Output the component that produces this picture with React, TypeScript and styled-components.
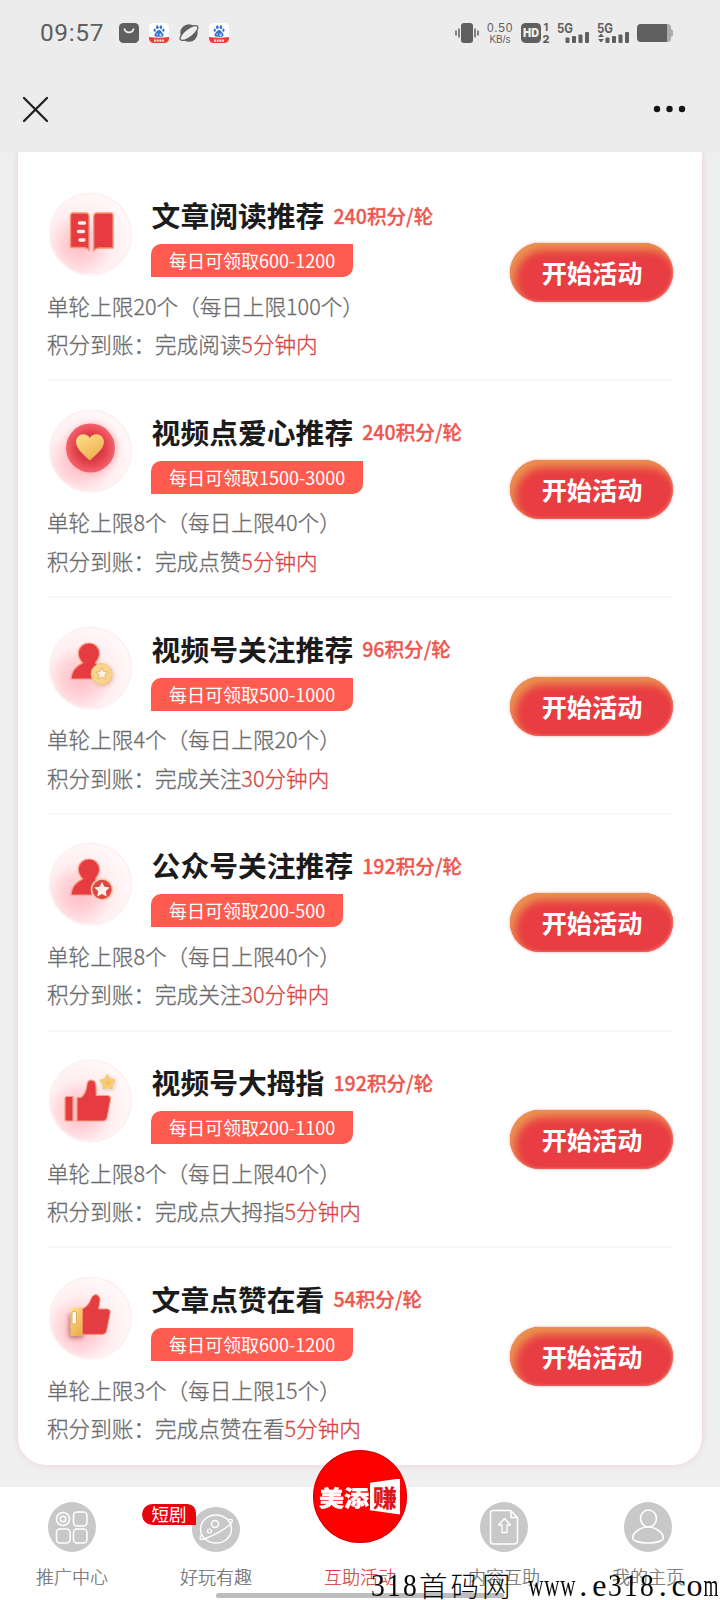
import React from 'react';
import styled, { createGlobalStyle } from 'styled-components';

const cjk = '"Noto Sans CJK SC", sans-serif';

const GlobalStyle = createGlobalStyle`
  *, *::before, *::after { box-sizing: border-box; }
  body { margin: 0; background: #efefef; font-family: ${cjk}; }
`;

const Screen = styled.div`
  position: relative;
  width: 720px;
  height: 1600px;
  display: flex;
  flex-direction: column;
  overflow: hidden;
  background: #efefef;
`;

const StatusBar = styled.header`
  height: 66px;
  flex: none;
  padding: 0 47px 0 40px;
  display: flex;
  align-items: center;
  justify-content: space-between;
  background: #ececec;
  color: #5f5f5f;
`;

const StatusGroup = styled.div<{ $gap: number }>`
  display: flex;
  align-items: center;
  gap: ${(p) => p.$gap}px;
`;

const Clock = styled.span`
  width: 69px;
  font: 400 24.5px/30px Roboto, sans-serif;
  letter-spacing: 0.6px;
`;

const Speed = styled.span`
  width: 30px;
  margin: 0 -1px;
  text-align: center;
  white-space: nowrap;
  font: 400 12px/12px "Liberation Sans", sans-serif;
  small { display: block; font-size: 10px; line-height: 11px; }
  b { display: block; font-weight: 400; letter-spacing: 0.7px; }
`;

const TitleBar = styled.div`
  height: 86px;
  flex: none;
  padding: 0 34px 0 22px;
  display: flex;
  align-items: center;
  justify-content: space-between;
  background: #ececec;
`;

const Content = styled.main`
  flex: 1;
  min-height: 0;
  padding: 0 18px;
  overflow: hidden;
`;

const Card = styled.section`
  height: 1313px;
  padding: 12.5px 30px 0;
  border-radius: 0 0 28px 28px;
  background: #fff;
  box-shadow: 0 0 7px rgba(255, 70, 90, 0.2);
`;

const Row = styled.article`
  height: 216.8px;
  padding-top: 27.5px;
  display: flex;
  align-items: flex-start;
  justify-content: space-between;
  border-bottom: 2px solid #f8f8f8;
  &:last-child { border-bottom: none; }
`;

const RowHead = styled.div`
  display: flex;
  gap: 18px;
  margin-left: 1px;
`;

const Heading = styled.div`
  height: 85px;
  display: flex;
  flex-direction: column;
  align-items: flex-start;
  justify-content: flex-end;
`;

const TitleLine = styled.div`
  display: flex;
  align-items: center;
  gap: 9px;
  margin-bottom: 8px;
  height: 42px;
  white-space: nowrap;
`;

const Title = styled.h2`
  margin: 0;
  padding-left: 0.6px;
  font-size: 28.8px;
  line-height: 42px;
  font-weight: 700;
  color: #1b1b1b;
`;

const Points = styled.span`
  font-size: 19.6px;
  font-weight: 500;
  line-height: 42px;
  padding-top: 1px;
  -webkit-text-stroke: 0.3px #ec5850;
  color: #ec5850;
`;

const Tag = styled.span`
  height: 33px;
  padding: 0 17.5px 0 18px;
  border-radius: 10px 0 10px 0;
  background: #ff5b4f;
  color: #fff;
  font-size: 18px;
  line-height: 33.5px;
  white-space: nowrap;
`;

const Details = styled.div`
  margin: 9.7px 0 0 -1px;
  color: #6b6b6b;
  font-size: 21.6px;
  line-height: 38.3px;
  font-weight: 300;
  -webkit-text-stroke: 0.3px currentColor;
  white-space: nowrap;
  p { margin: 0; }
  em { font-style: normal; color: #d84444; }
`;

const StartButton = styled.button`
  width: 163px;
  height: 59px;
  margin: 51px -1px 0 0;
  padding: 0;
  border: none;
  border-radius: 30px;
  background: #e83d42;
  box-shadow: inset 5px 7px 8px #eb9450, inset -1px -1px 3px #f26a60, 0 0 3px rgba(235, 80, 75, 0.5);
  color: #fff;
  font: 700 25.2px/57px ${cjk};
  text-indent: 1px;
`;

const TabBar = styled.nav`
  height: 113px;
  flex: none;
  display: grid;
  grid-template-columns: repeat(5, 144px);
  background: #fff;
`;

const Tab = styled.div<{ $active?: boolean }>`
  position: relative;
  display: flex;
  flex-direction: column;
  align-items: center;
  justify-content: flex-end;
  padding-bottom: 11px;
  color: ${(p) => (p.$active ? '#d43c3c' : '#6e6e6e')};
  font-size: 18px;
  line-height: 26px;
  font-weight: 300;
  -webkit-text-stroke: 0.2px currentColor;
`;

const TabIcon = styled.svg<{ $h?: number }>`
  width: 48px;
  height: ${(p) => p.$h ?? 50}px;
  margin-bottom: 11px;
  flex: none;
`;

const DramaBadge = styled.span`
  position: absolute;
  left: -2px;
  top: 17px;
  width: 54px;
  height: 21px;
  border-radius: 11px 9px 0 11px;
  background: #e8040c;
  color: #fff;
  font-size: 17.5px;
  line-height: 19px;
  font-weight: 400;
  text-align: center;
  -webkit-text-stroke: 0;
`;

const BrandCircle = styled.div`
  position: absolute;
  left: 25px;
  top: -37px;
  width: 94px;
  height: 93px;
  padding-left: 6px;
  border-radius: 50%;
  background: #fe0000;
  box-shadow: inset 0 0 3px #a80000;
  display: flex;
  align-items: center;
  color: #fff;
  font-size: 25px;
  font-weight: 900;
  line-height: 34px;
  -webkit-text-stroke: 0.4px #fff;
`;

const BrandWord = styled.span`
  display: block;
  transform: scaleY(0.88);
  transform-origin: 50% 35%;
`;

const BrandTile = styled.span`
  width: 30px;
  height: 36px;
  margin-left: 1px;
  clip-path: polygon(0 12%, 100% 0, 100% 100%, 0 88%);
  background: #fff;
  color: #dc1818;
  text-align: center;
  font-size: 24px;
  line-height: 35px;
  -webkit-text-stroke: 0;
`;

const HomeIndicator = styled.div`
  position: absolute;
  left: 216px;
  top: 1593px;
  width: 288px;
  height: 5px;
  border-radius: 3px;
  background: #bdbdbd;
`;

const Watermark = styled.div`
  position: absolute;
  left: 370px;
  top: 1566px;
  display: flex;
  height: 38px;
  color: #080808;
  line-height: 38px;
  white-space: pre;
`;

const Cell = styled.span<{ $wide?: boolean; $squeeze: number }>`
  width: ${(p) => (p.$wide ? 31.4 : 15.9)}px;
  display: flex;
  justify-content: center;
  font-family: ${(p) => (p.$wide ? cjk : '"Liberation Serif", serif')};
  font-size: ${(p) => (p.$wide ? 28.5 : 32)}px;
  font-weight: ${(p) => (p.$wide ? 300 : 400)};
  transform: scaleX(${(p) => p.$squeeze});
`;

const Bag = () => (
  <svg width="20" height="20" viewBox="0 0 20 20">
    <rect width="20" height="20" rx="4.5" fill="#5f5f5f" />
    <path d="M5.5 6c1 4.6 8 4.6 9 0" fill="none" stroke="#ececec" strokeWidth="1.7" strokeLinecap="round" />
  </svg>
);

const Paw = () => (
  <svg width="20" height="20" viewBox="0 0 20 20">
    <rect width="20" height="20" rx="4.5" fill="#fff" />
    <path d="M0 14q10 1.6 20 0v1.5a4.5 4.5 0 0 1-4.5 4.5h-11A4.5 4.5 0 0 1 0 15.5z" fill="#ee3b35" />
    <path d="M5 17.6h10" stroke="#fff" strokeWidth="2.2" strokeDasharray="2 .7" opacity=".85" />
    <g fill="#3672d4">
      <ellipse cx="8.3" cy="4.2" rx="1.3" ry="1.9" />
      <ellipse cx="11.9" cy="4.2" rx="1.3" ry="1.9" />
      <ellipse cx="5.7" cy="7.2" rx="1.1" ry="1.6" />
      <ellipse cx="14.4" cy="7.2" rx="1.1" ry="1.6" />
      <path d="M10 7c2 0 2.5 2 4 3.5 1.2 1.6.3 3.3-1.5 3.3h-5c-1.8 0-2.7-1.7-1.5-3.3C7.5 9 8 7 10 7z" />
    </g>
    <path d="M8.2 10.5v2M11 10.5v2h1.2v-2" stroke="#fff" strokeWidth=".8" fill="none" />
  </svg>
);

const Planet = () => (
  <svg width="20" height="20" viewBox="0 0 20 20">
    <circle cx="10" cy="10" r="8.7" fill="#5f5f5f" />
    <ellipse cx="10" cy="10" rx="10.8" ry="4.2" transform="rotate(-38 10 10)" fill="#ececec" stroke="#5f5f5f" strokeWidth="1.3" />
  </svg>
);

const Vibrate = () => (
  <svg width="24" height="20" viewBox="0 0 24 20">
    <rect x="6" width="12" height="20" rx="3" fill="#5f5f5f" />
    <path d="M1 7.5v5M4 5.5v9M20 5.5v9M23 7.5v5" stroke="#5f5f5f" strokeWidth="1.5" />
  </svg>
);

const HdIcon = () => (
  <svg width="29" height="20" viewBox="0 0 29 20" fontFamily="Inter, sans-serif" fill="#5f5f5f">
    <rect width="20" height="20" rx="4.5" />
    <text x="2" y="14.3" fontSize="12" fontWeight="900" fill="#ececec" textLength="16" lengthAdjust="spacingAndGlyphs">HD</text>
    <text x="22.5" y="8" fontSize="11" fontWeight="700">1</text>
    <text x="21.5" y="19.8" fontSize="11" fontWeight="800">2</text>
  </svg>
);

const Signal = ({ arrows = false }: { arrows?: boolean }) => (
  <svg width="33" height="20" viewBox="0 0 33 20" fill="#5f5f5f">
    <text x="0" y="9.5" fontFamily="Inter, sans-serif" fontSize="12.5" fontWeight="700" textLength="16" lengthAdjust="spacingAndGlyphs">5G</text>
    <rect x="8.5" y="14.5" width="4" height="5.5" rx="1" />
    <rect x="15" y="13" width="4" height="7" rx="1" />
    <rect x="21.5" y="11.5" width="4" height="8.5" rx="1" />
    <rect x="28" y="9" width="4" height="11" rx="1" />
    {arrows && <path d="M1 14l3-3.5 3 3.5zM1 16l3 3.5 3-3.5z" />}
  </svg>
);

const Battery = () => (
  <svg width="36" height="18" viewBox="0 0 36 18">
    <rect x="20" width="14" height="18" rx="3.5" fill="#ababab" />
    <rect x="32" y="5.5" width="4" height="7" rx="1.5" fill="#ababab" />
    <path d="M4 0h26v18H4a4 4 0 0 1-4-4V4a4 4 0 0 1 4-4z" fill="#5f5f5f" />
  </svg>
);

type IconKind = 'book' | 'heart' | 'coin' | 'star' | 'thumbStar' | 'thumb';

const starPoints = '0,-8 2.4,-3.3 7.6,-2.5 3.8,1.2 4.7,6.5 0,4 -4.7,6.5 -3.8,1.2 -7.6,-2.5 -2.4,-3.3';

const Person = () => (
  <path
    d="M40 17c6 0 10.5 4.5 10.5 10.5 0 4-2 6.500-4 9.500 5 3 9 8 10.500 16H22c.5-8 5-13 11.500-16-2.500-3-4.200-5.500-4.200-9.500C29.300 21.500 34 17 40 17z"
    fill="#e73b43" stroke="#f7a184" strokeWidth="1.2" filter="url(#soft)"
  />
);

const TaskIcon = ({ kind }: { kind: IconKind }) => {
  const bg = `disc-${kind}`;
  return (
    <svg width="84" height="85" viewBox="0 0 84 85">
      <defs>
        <radialGradient id={bg} cx=".37" cy=".63" r=".62">
          <stop offset="0" stopColor="#ffbcc4" />
          <stop offset=".35" stopColor="#ffd3d8" />
          <stop offset=".65" stopColor="#ffeff1" />
          <stop offset="1" stopColor="#fff7f8" />
        </radialGradient>
        <linearGradient id={`gold-${kind}`} x1="0" y1="0" x2=".6" y2="1">
          <stop offset="0" stopColor="#ffe28a" />
          <stop offset="1" stopColor="#edb052" />
        </linearGradient>
        <radialGradient id={`core-${kind}`}>
          <stop offset="0" stopColor="#c52c3a" />
          <stop offset=".55" stopColor="#df3b47" />
          <stop offset="1" stopColor="#f4636c" />
        </radialGradient>
        <filter id="soft" x="-20%" y="-20%" width="140%" height="140%"><feGaussianBlur stdDeviation=".45" /></filter>
        <filter id="shade" x="-40%" y="-40%" width="180%" height="180%"><feGaussianBlur stdDeviation="2.5" /></filter>
      </defs>
      <circle cx="41.5" cy="42" r="40.8" fill={`url(#${bg})`} stroke="#fcf0f1" strokeWidth="1.6" />
      {kind === 'book' && (
        <g>
          <g fill="#e63b41" stroke="#f7936e" strokeWidth="1.3" filter="url(#soft)">
            <path d="M24 21h13q3 0 3 4v33q-2-2.5-5-2.5H21.5V24q0-3 2.5-3z" />
            <path d="M48 21h14q2 0 2 2.5V56H50q-3 0-5.2 2.5V25q0-4 3.2-4z" />
          </g>
          <path d="M30.5 31h5M29.5 39.500h5M31 48h4" stroke="#fff0e4" strokeWidth="3.4" strokeLinecap="round" />
        </g>
      )}
      {kind === 'heart' && (
        <g>
          <circle cx="43" cy="40" r="27" fill="#ffb9c0" opacity=".6" filter="url(#shade)" />
          <circle cx="41.5" cy="39" r="24.5" fill="url(#core-heart)" filter="url(#soft)" />
          <path d="M40.8 51.5C35 46 27 40 27 33c0-8 10-10.5 13.8-4C44.5 22.5 55 25 55 33c0 7-8.5 13-14.2 18.5z" fill="url(#gold-heart)" filter="url(#soft)" />
        </g>
      )}
      {kind === 'coin' && (
        <g>
          <Person />
          <circle cx="54" cy="50" r="10" fill="#c88d70" opacity=".6" filter="url(#shade)" />
          <circle cx="52.7" cy="48" r="10.5" fill="#f8d48d" stroke="#f5c578" />
          <polygon points={starPoints} transform="translate(53 48) scale(.8)" fill="#fff2df" stroke="#edbe7c" strokeWidth="1.5" strokeLinejoin="round" filter="url(#soft)" />
        </g>
      )}
      {kind === 'star' && (
        <g>
          <Person />
          <circle cx="53" cy="47.5" r="10.5" fill="#d84a43" stroke="#ffc9ae" strokeWidth="1.6" />
          <polygon points={starPoints} transform="translate(53 48)" fill="#fff0e8" />
        </g>
      )}
      {kind === 'thumbStar' && (
        <g>
          <path d="M16 39q0-1.5 2-1.5h6V62h-6q-2 0-2-2zM28 38.5h4c4-3 5.5-8 6-13 .5-6 8.5-6 9 1l.3 10H58q4 0 3.5 4L58 59q-1 3-4 3H28z" fill="#e73b43" stroke="#f7a184" strokeWidth="1.2" filter="url(#soft)" />
          <polygon points={starPoints} transform="translate(59.5 25)" fill="#b87d60" opacity=".6" filter="url(#shade)" />
          <polygon points={starPoints} transform="translate(58.5 23.5) scale(.85)" fill="url(#gold-thumbStar)" stroke="#f8cc71" strokeWidth="3.4" strokeLinejoin="round" filter="url(#soft)" />
        </g>
      )}
      {kind === 'thumb' && (
        <g>
          <path d="M20 38h14v24H20z" fill="#9c4040" opacity=".65" filter="url(#shade)" />
          <path d="M33 33c5-2 7.5-6 9-10 2.5-7 9-4.5 9 1l-1.5 9H58q3.5 0 3.2 3.5L57.5 55q-1 3.3-4 3.3H33z" fill="#e33d43" stroke="#f58c73" strokeWidth="1" filter="url(#soft)" />
          <path d="M23 31.5h10.5V60H21.5V33q0-1.5 1.5-1.5z" fill="url(#gold-thumb)" />
          <rect x="23" y="35.5" width="4.5" height="12.5" rx="1.5" fill="#fffdf5" stroke="#d99a42" strokeWidth=".8" />
        </g>
      )}
    </svg>
  );
};

interface Task {
  icon: IconKind;
  title: string;
  points: number;
  daily: string;
  per: number;
  max: number;
  action: string;
  wait: number;
}

const tasks: Task[] = [
  { icon: 'book', title: '文章阅读推荐', points: 240, daily: '600-1200', per: 20, max: 100, action: '阅读', wait: 5 },
  { icon: 'heart', title: '视频点爱心推荐', points: 240, daily: '1500-3000', per: 8, max: 40, action: '点赞', wait: 5 },
  { icon: 'coin', title: '视频号关注推荐', points: 96, daily: '500-1000', per: 4, max: 20, action: '关注', wait: 30 },
  { icon: 'star', title: '公众号关注推荐', points: 192, daily: '200-500', per: 8, max: 40, action: '关注', wait: 30 },
  { icon: 'thumbStar', title: '视频号大拇指', points: 192, daily: '200-1100', per: 8, max: 40, action: '点大拇指', wait: 5 },
  { icon: 'thumb', title: '文章点赞在看', points: 54, daily: '600-1200', per: 3, max: 15, action: '点赞在看', wait: 5 },
];

const TaskRow = ({ task }: { task: Task }) => (
  <Row>
    <div>
      <RowHead>
        <TaskIcon kind={task.icon} />
        <Heading>
          <TitleLine>
            <Title>{task.title}</Title>
            <Points>{`${task.points}积分/轮`}</Points>
          </TitleLine>
          <Tag>{`每日可领取${task.daily}`}</Tag>
        </Heading>
      </RowHead>
      <Details>
        <p>{`单轮上限${task.per}个（每日上限${task.max}个）`}</p>
        <p>{`积分到账：完成${task.action}`}<em>{`${task.wait}分钟内`}</em></p>
      </Details>
    </div>
    <StartButton>开始活动</StartButton>
  </Row>
);

const watermark = '318首码网 www.e318.com';

const squeezeFor = (c: string) => {
  if (c === 'w') return 0.66;
  if (c === 'm') return 0.6;
  return /\d/.test(c) ? 0.86 : 1;
};

export default function App() {
  return (
    <>
      <GlobalStyle />
      <Screen>
        <StatusBar>
          <StatusGroup $gap={10}>
            <Clock>09:57</Clock>
            <Bag />
            <Paw />
            <Planet />
            <Paw />
          </StatusGroup>
          <StatusGroup $gap={7}>
            <Vibrate />
            <Speed><b>0.50</b><small>KB/s</small></Speed>
            <HdIcon />
            <Signal />
            <Signal arrows />
            <Battery />
          </StatusGroup>
        </StatusBar>
        <TitleBar>
          <svg width="27" height="27" viewBox="0 0 27 27">
            <path d="M2 2l23 23M25 2L2 25" stroke="#202020" strokeWidth="2.3" strokeLinecap="round" />
          </svg>
          <svg width="33" height="8" viewBox="0 0 33 8" fill="#161616">
            <circle cx="4" cy="4" r="3.2" />
            <circle cx="16.5" cy="4" r="3.2" />
            <circle cx="29" cy="4" r="3.2" />
          </svg>
        </TitleBar>
        <Content>
          <Card>
            {tasks.map((t) => <TaskRow key={t.title} task={t} />)}
          </Card>
        </Content>
        <TabBar>
          <Tab>
            <TabIcon viewBox="0 0 48 50" fill="none" stroke="#fff" strokeWidth="1.5">
              <ellipse cx="24" cy="25" rx="24" ry="25" fill="#c8c8c8" stroke="none" />
              <circle cx="15" cy="17" r="6.5" />
              <circle cx="15" cy="17" r="2.8" />
              <rect x="25.5" y="10" width="13.5" height="14" rx="3.5" />
              <rect x="8.5" y="27" width="13.5" height="14" rx="3.5" />
              <rect x="25.5" y="27" width="13.5" height="14" rx="3.5" />
            </TabIcon>
            推广中心
          </Tab>
          <Tab>
            <TabIcon $h={45} viewBox="0 0 48 45" fill="none" stroke="#fff" strokeWidth="1.4">
              <ellipse cx="24" cy="22.5" rx="24" ry="22.5" fill="#c8c8c8" stroke="none" />
              <ellipse cx="24" cy="22" rx="15.5" ry="14" />
              <circle cx="23" cy="17" r="3.5" />
              <circle cx="17.5" cy="24" r="2" strokeWidth="1.2" />
              <path d="M9.5 28c-3 4-1 5.5 4 3.5C23 28 31 23 37 18.5c5-4.500 4-7.500-1-5.500" />
            </TabIcon>
            <DramaBadge>短剧</DramaBadge>
            好玩有趣
          </Tab>
          <Tab $active>
            <BrandCircle><BrandWord>美添</BrandWord><BrandTile>赚</BrandTile></BrandCircle>
            互助活动
          </Tab>
          <Tab>
            <TabIcon viewBox="0 0 48 50" fill="none" stroke="#fff" strokeWidth="1.5" strokeLinejoin="round">
              <ellipse cx="24" cy="25" rx="24" ry="25" fill="#c8c8c8" stroke="none" />
              <path d="M13 8.5h17.5l7 7V39q0 3-3 3H13q-2.5 0-2.5-3V11.5q0-3 2.5-3zM31 8.5V15.5h6.5" />
              <path d="M24.5 16.5l6 6.5h-3.5v7.5h-5V23h-3.5z" strokeWidth="1.3" />
            </TabIcon>
            内容互助
          </Tab>
          <Tab>
            <TabIcon viewBox="0 0 48 50" fill="none" stroke="#fff" strokeWidth="1.6">
              <ellipse cx="24" cy="25" rx="24" ry="25" fill="#c8c8c8" stroke="none" />
              <ellipse cx="24.5" cy="16.5" rx="8" ry="8.5" />
              <path d="M24 25c8 0 15.3 6 15.3 11 0 3-7 5-15.3 5s-15.3-2-15.3-5c0-5 7.3-11 15.3-11z" />
            </TabIcon>
            我的主页
          </Tab>
        </TabBar>
        <HomeIndicator />
        <Watermark>
          {[...watermark].map((c, i) => (
            <Cell key={i} $wide={c > '\u4e00'} $squeeze={squeezeFor(c)}>{c}</Cell>
          ))}
        </Watermark>
      </Screen>
    </>
  );
}
